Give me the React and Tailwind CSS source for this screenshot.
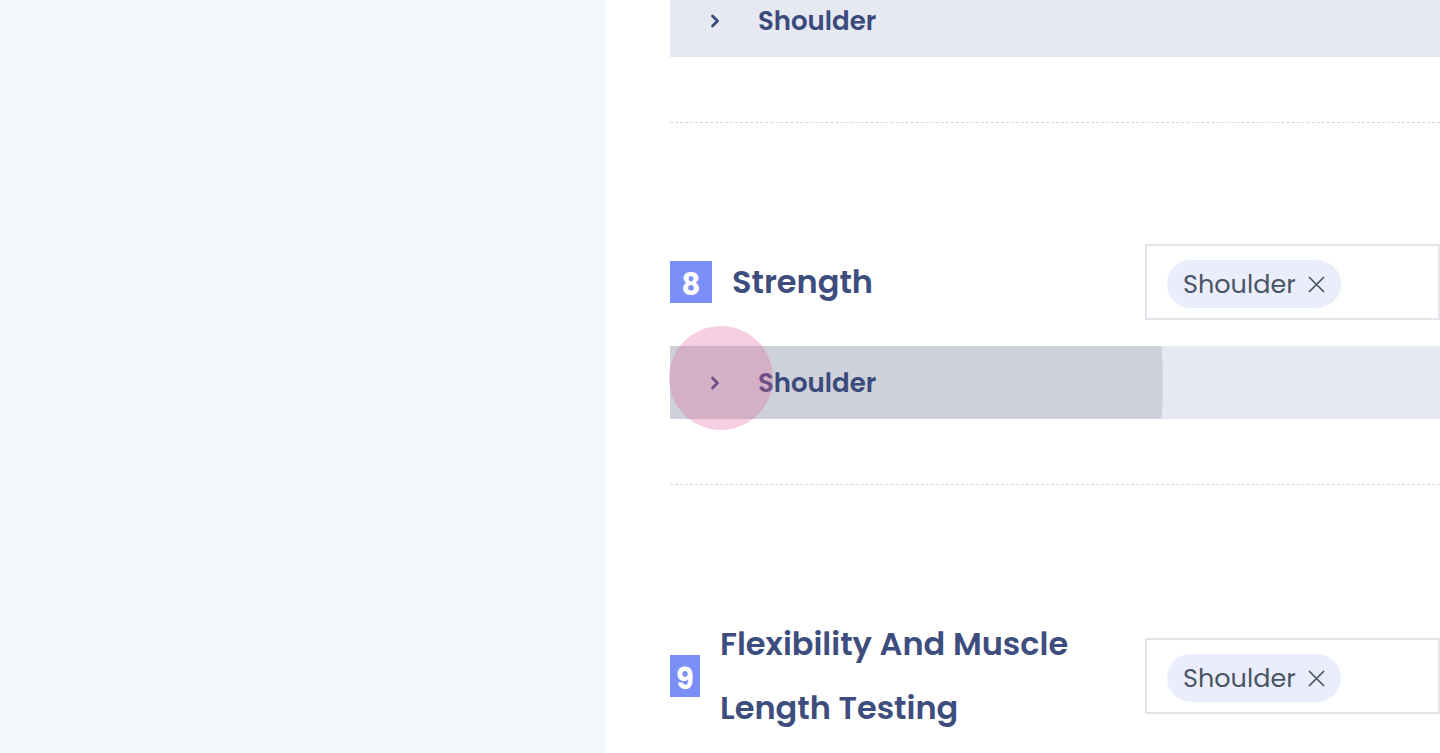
import React from "react";

const font = { fontFamily: "Poppins, Inter, 'Noto Sans', sans-serif" };

function Chevron() {
  return (
    <svg width="14" height="16" viewBox="0 0 14 16" className="text-[#3b4a7a]">
      <path d="M4.5 3 L9.5 8 L4.5 13" fill="none" stroke="currentColor" strokeWidth="2.8" strokeLinecap="round" strokeLinejoin="round" />
    </svg>
  );
}

function Row({ ripple }) {
  return (
    <div className="relative h-[73px] bg-[#e6e9f2] flex items-center">
      {ripple && (
        <div className="absolute inset-0 overflow-hidden">
          <div className="absolute left-[-391px] top-[-405px] w-[884px] h-[884px] rounded-full bg-[rgba(0,0,0,0.1)]" />
        </div>
      )}
      {ripple && (
        <div className="absolute left-[-1px] top-[-20px] w-[104px] h-[104px] rounded-full bg-[rgba(226,100,160,0.3)] z-10" />
      )}
      <div className="relative w-[88px] flex justify-center pl-[1px]">
        <Chevron />
      </div>
      <span className="relative text-[26px] font-semibold text-[#3b4a7a] leading-none">Shoulder</span>
    </div>
  );
}

function Chip() {
  return (
    <div className="h-[76px] flex-1 border-2 border-[#e1e4ea] flex items-center pl-[20px]">
      <div className="mt-[4px] h-[48px] rounded-full bg-[#eaedfc] flex items-center pl-[16px] pr-[15px] gap-[11px]">
        <span className="text-[25.5px] text-[#4b5563] leading-none pt-[2px]">Shoulder</span>
        <svg width="19" height="19" viewBox="0 0 19 19" className="text-[#4b5563]">
          <path d="M2 2 L17 17 M17 2 L2 17" stroke="currentColor" strokeWidth="1.7" />
        </svg>
      </div>
    </div>
  );
}

function Badge({ n, w }) {
  return (
    <div className={`${w} h-[42px] shrink-0 bg-[#7b8ff8] text-white text-[29px] font-bold flex items-center justify-center leading-none pt-[6px]`}>
      {n}
    </div>
  );
}

export default function App() {
  return (
    <div className="flex h-[753px] overflow-hidden" style={font}>
      <div className="w-[606px] shrink-0 bg-[#f4f7fc]" />
      <div className="flex-1 bg-white pl-[64px] overflow-hidden">
        <div className="mt-[-16px]">
          <Row />
          <div className="h-[66px] border-b border-dashed border-[#d0d6e6]" />
          <div className="pt-[121px] flex items-center">
            <div className="w-[475px] flex items-center">
              <Badge n="8" w="w-[42px]" />
              <div className="ml-[20px] py-[6px] text-[32px] leading-[64px] font-semibold text-[#3d4d7d]">Strength</div>
            </div>
            <Chip />
          </div>
          <div className="mt-[26px]">
            <Row ripple />
          </div>
          <div className="h-[66px] border-b border-dashed border-[#d0d6e6]" />
          <div className="pt-[121px] flex items-center">
            <div className="w-[475px] flex items-center">
              <Badge n="9" w="w-[30px]" />
              <div className="ml-[20px] py-[6px] text-[32px] leading-[64px] font-semibold text-[#3d4d7d]">
                Flexibility And Muscle
                <br />
                Length Testing
              </div>
            </div>
            <Chip />
          </div>
        </div>
      </div>
    </div>
  );
}
